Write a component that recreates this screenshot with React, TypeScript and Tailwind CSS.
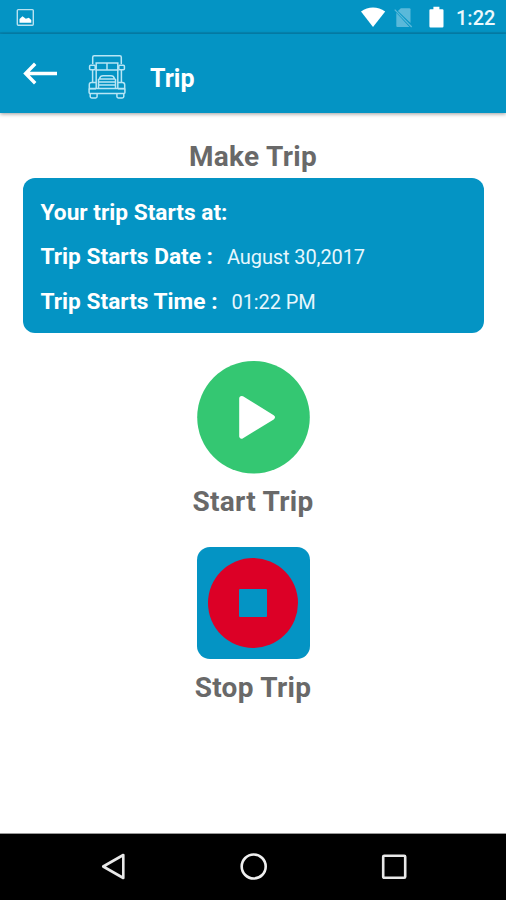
import type { ReactNode } from "react";

function StatusBar() {
  return (
    <div className="flex h-[34px] items-start border-b-2 border-[#0586b3] bg-[#0494c4]">
      <svg className="ml-4 mt-2 h-[19px] w-[19px]" viewBox="0 0 19 19">
        <rect x="1.3" y="1.6" width="16" height="15.6" rx="1" fill="none" stroke="#b9e2f0" strokeWidth="1.4" />
        <path d="M3.5 14.8V11l3-2.7 3.3 2.5 3-1 2.5 2.2v2.8z" fill="#fff" />
      </svg>
      <svg className="ml-auto mt-1 h-6 w-[90px]" viewBox="0 0 90 24">
        <path d="M1 7.5Q6.5 3.5 13 3.5T25.2 7.5L13 23z" fill="#fff" />
        <path d="M40.8 4.3H49.5q1 0 1 1V19L37.9 7z" fill="#5ab9da" />
        <path d="M36.3 8.7V22q0 1 1 1H49.5z" fill="#5ab9da" />
        <path d="M34.7 5.6 51.7 23" stroke="#5ab9da" strokeWidth="1.3" />
        <path d="M70.5 5.2h2.9V2.8h6v2.4h3q1.1 0 1.1 1v16q0 1.2-1.1 1.2H70.5q-1.1 0-1.1-1.2v-16q0-1 1.1-1z" fill="#fff" />
      </svg>
      <span className="ml-[6px] mr-[11px] mt-[6px] w-[39px] whitespace-nowrap text-[20px] font-medium leading-6 text-[#edf9fd]">1:22</span>
    </div>
  );
}

function TruckIcon() {
  return (
    <svg className="ml-[30px] h-[46px] w-[38px]" viewBox="0 0 38 46" fill="none" stroke="#b8e6f5" strokeWidth="1.5">
      <path d="M4.7 10V3.2q0-1.5 1.5-1.5h25.6q1.5 0 1.5 1.5V10M8.2 8.9h21.6V16H8.2zM19 9v7" />
      <rect x="1.6" y="11.2" width="5.6" height="4.5" rx="1" />
      <rect x="30.8" y="11.2" width="5.6" height="4.5" rx="1" />
      <path d="M4.6 16v12M33.4 16v12M8.2 16v18M29.8 16v18M11.5 24.5q.8-2.8 3.5-2.8h8q2.7 0 3.5 2.8M10.5 25h17M10.5 28h17M10.5 31h17M10.5 25v9M27.5 25v9" />
      <path d="M8 28.5H3.5Q1.3 28.5 1.3 30.8v4H8M30 28.5h4.5q2.2 0 2.2 2.3v4H30" />
      <rect x="1.1" y="34.5" width="35.8" height="5" rx="1" />
      <path d="M2.2 39.6v2.9q0 1.4 1.5 1.4h4q1.4 0 1.4-1.4v-2.9M28.9 39.6v2.9q0 1.4 1.4 1.4h4q1.5 0 1.5-1.4v-2.9" />
    </svg>
  );
}

function AppBar() {
  return (
    <header className="relative flex h-[79px] items-start bg-[#0494c4] shadow-[0_1px_4px_rgba(0,0,0,0.4)]">
      <svg className="ml-[22px] mt-[27px] h-6 w-9" viewBox="0 0 36 24" fill="none" stroke="#fff" strokeWidth="3.4">
        <path d="M3 12.5H35M13.2 2.7 3.6 12.5 13.2 22.3" />
      </svg>
      <div className="mt-5"><TruckIcon /></div>
      <h1 className="ml-6 mt-[31px] text-[25px] font-bold leading-7 text-white">Trip</h1>
    </header>
  );
}

function DetailRow({ label, value }: { label: string; value?: string }) {
  return (
    <div className="flex h-[44.3px] items-baseline whitespace-nowrap leading-7 text-white">
      <span className="text-[22.7px] font-bold">{label}</span>
      {value && <span className="ml-[14px] text-[20px] tracking-[-0.1px] text-[#e7f7fd]">{value}</span>}
    </div>
  );
}

function Heading({ children }: { children: ReactNode }) {
  return <h2 className="whitespace-nowrap text-center text-[28px] font-bold leading-8 tracking-[0.3px] text-[#696969]">{children}</h2>;
}

export default function App() {
  return (
    <div className="flex h-[900px] w-[506px] flex-col overflow-hidden bg-white font-['Roboto',sans-serif]">
      <StatusBar />
      <AppBar />
      <main className="flex flex-1 flex-col items-center pt-7">
        <Heading>Make Trip</Heading>
        <section className="mt-[5px] h-[154.5px] w-[461px] rounded-[12px] bg-[#0494c4] pl-[18px] pt-[21px]">
          <DetailRow label="Your trip Starts at:" />
          <DetailRow label="Trip Starts Date :" value="August 30,2017" />
          <DetailRow label="Trip Starts Time :" value="01:22 PM" />
        </section>
        <button className="mt-[28.5px] h-[113px] w-[113px]" aria-label="Start trip">
          <svg viewBox="0 0 113 113">
            <circle cx="56.5" cy="56.3" r="56.3" fill="#34c772" />
            <path d="M44.7 37.4 75.4 56.3 44.7 75.2z" fill="#fff" stroke="#fff" strokeWidth="5" strokeLinejoin="round" />
          </svg>
        </button>
        <div className="mt-3"><Heading>Start Trip</Heading></div>
        <button className="mt-[29px] flex h-[112px] w-[113px] items-center justify-center rounded-[13px] bg-[#0494c4]" aria-label="Stop trip">
          <span className="flex h-[90px] w-[90px] items-center justify-center rounded-full bg-[#dc0026]">
            <span className="h-7 w-7 rounded-[1px] bg-[#0494c4]" />
          </span>
        </button>
        <div className="mt-[13px]"><Heading>Stop Trip</Heading></div>
      </main>
      <nav className="flex h-[67px] items-center justify-between border-t border-[#999] bg-black pl-[100px] pr-[98px]">
        <svg className="h-7 w-7" viewBox="0 0 28 28" fill="none" stroke="#e8e8e8" strokeWidth="2.6">
          <path d="M23.3 2V25L3.2 13.5z" strokeLinejoin="round" />
        </svg>
        <svg className="h-7 w-7" viewBox="0 0 28 28" fill="none" stroke="#f0f0f0" strokeWidth="2.6">
          <circle cx="13.7" cy="13.5" r="12" />
        </svg>
        <svg className="h-7 w-7" viewBox="0 0 28 28" fill="none" stroke="#e8e8e8" strokeWidth="2.6">
          <rect x="3.2" y="2.8" width="22" height="22" rx="1" />
        </svg>
      </nav>
    </div>
  );
}
